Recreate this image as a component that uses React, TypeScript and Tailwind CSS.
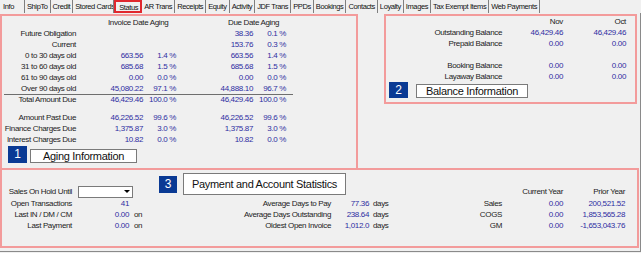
const tabs = [
  { label: "Info", cls: "w-[25px] pl-[3px]" },
  { label: "ShipTo", cls: "px-[2px]" },
  { label: "Credit", cls: "px-[2px]" },
  { label: "Stored Cards", cls: "w-[41px] pl-[2px] overflow-hidden" },
  { label: "Status", cls: "w-[28px] pl-[3px] border-2 border-[#e0282e]", active: true },
  { label: "AR Trans", cls: "px-[2px]" },
  { label: "Receipts", cls: "px-[2px]" },
  { label: "Equity", cls: "px-[2px]" },
  { label: "Activity", cls: "px-[2px]" },
  { label: "JDF Trans", cls: "px-[2px]" },
  { label: "PPDs", cls: "px-[2px]" },
  { label: "Bookings", cls: "px-[2px]" },
  { label: "Contacts", cls: "px-[2px]" },
  { label: "Loyalty", cls: "px-[2px]" },
  { label: "Images", cls: "px-[2px]" },
  { label: "Tax Exempt Items", cls: "px-[2px]" },
  { label: "Web Payments", cls: "px-[2px]" },
];

type AgingRow = { label: string; inv?: string; invPct?: string; due: string; duePct: string };

const agingTop: AgingRow[] = [
  { label: "Future Obligation", due: "38.36", duePct: "0.1 %" },
  { label: "Current", due: "153.76", duePct: "0.3 %" },
  { label: "0 to 30 days old", inv: "663.56", invPct: "1.4 %", due: "663.56", duePct: "1.4 %" },
  { label: "31 to 60 days old", inv: "685.68", invPct: "1.5 %", due: "685.68", duePct: "1.5 %" },
  { label: "61 to 90 days old", inv: "0.00", invPct: "0.0 %", due: "0.00", duePct: "0.0 %" },
  { label: "Over 90 days old", inv: "45,080.22", invPct: "97.1 %", due: "44,888.10", duePct: "96.7 %" },
];

const agingBottom: AgingRow[] = [
  { label: "Amount Past Due", inv: "46,226.52", invPct: "99.6 %", due: "46,226.52", duePct: "99.6 %" },
  { label: "Finance Charges Due", inv: "1,375.87", invPct: "3.0 %", due: "1,375.87", duePct: "3.0 %" },
  { label: "Interest Charges Due", inv: "10.82", invPct: "0.0 %", due: "10.82", duePct: "0.0 %" },
];

const VAL = "text-[#2e2ea2]";

function AgingLine({ row, tall = "h-[11px] leading-[11px]" }: { row: AgingRow; tall?: string }) {
  return (
    <div className={`grid grid-cols-[74px_67px_33px_77px_33px] text-right ${tall}`}>
      <span>{row.label}</span>
      <span className={VAL}>{row.inv}</span>
      <span className={VAL}>{row.invPct}</span>
      <span className={VAL}>{row.due}</span>
      <span className={VAL}>{row.duePct}</span>
    </div>
  );
}

function NumBox({ n, cls }: { n: string; cls: string }) {
  return (
    <div className={`bg-[#0a3a94] text-white text-[12px] tracking-normal text-center ${cls}`}>{n}</div>
  );
}

function TitleBox({ text, cls }: { text: string; cls: string }) {
  return (
    <div className={`border border-[#7a7a7a] bg-white text-[11px] tracking-[-0.3px] text-center text-[#111] whitespace-nowrap ${cls}`}>
      {text}
    </div>
  );
}

function TabStrip() {
  return (
    <div className="flex h-[13px] text-[7.5px] tracking-[-0.4px] text-[#111]">
      {tabs.map((t) => (
        <div
          key={t.label}
          className={`h-[13px] leading-[11px] whitespace-nowrap ${t.active ? "" : "border-r border-[#7f7f7f] leading-[13px]"} ${t.cls}`}
        >
          {t.label}
        </div>
      ))}
    </div>
  );
}

function AgingPanel() {
  return (
    <div className="w-[358px] h-[154px] shrink-0 border-2 border-b-0 border-[#f39b9b] pt-px">
      <div className="grid grid-cols-[106px_120px_auto] h-[11px] leading-[11px]">
        <span />
        <span>Invoice Date Aging</span>
        <span>Due Date Aging</span>
      </div>
      {agingTop.map((r) => (
        <AgingLine key={r.label} row={r} />
      ))}
      <div className="ml-[2px] w-[289px] h-px bg-[#6e6e6e]" />
      <AgingLine
        row={{ label: "Total Amount Due", inv: "46,429.46", invPct: "100.0 %", due: "46,429.46", duePct: "100.0 %" }}
        tall="h-[10px] leading-[10px]"
      />
      <div className="mt-[7px]">
        {agingBottom.map((r) => (
          <AgingLine key={r.label} row={r} />
        ))}
      </div>
      <div className="mt-px ml-[6px] flex items-end gap-[3px]">
        <NumBox n="1" cls="w-[19px] h-[17px] leading-[17px]" />
        <TitleBox text="Aging Information" cls="w-[107px] h-[14px] leading-[12px]" />
      </div>
    </div>
  );
}

const balances = [
  { label: "Outstanding Balance", nov: "46,429.46", oct: "46,429.46" },
  { label: "Prepaid Balance", nov: "0.00", oct: "0.00" },
  null,
  { label: "Booking Balance", nov: "0.00", oct: "0.00" },
  { label: "Layaway Balance", nov: "0.00", oct: "0.00" },
];

function BalancePanel() {
  return (
    <div className="ml-[26px] w-[253px] h-[90px] shrink-0 border-2 border-[#f39b9b]">
      <div className="grid grid-cols-[116px_61px_63px] h-[11px] leading-[11px] text-right">
        <span />
        <span>Nov</span>
        <span>Oct</span>
      </div>
      {balances.map((b, i) =>
        b ? (
          <div key={b.label} className="grid grid-cols-[116px_61px_63px] h-[11px] leading-[11px] text-right">
            <span>{b.label}</span>
            <span className={VAL}>{b.nov}</span>
            <span className={VAL}>{b.oct}</span>
          </div>
        ) : (
          <div key={i} className="h-[11px]" />
        )
      )}
      <div className="ml-[3px] flex items-end gap-[8px]">
        <NumBox n="2" cls="w-[19px] h-[16px] leading-[16px]" />
        <TitleBox text="Balance Information" cls="w-[112px] h-[14px] leading-[12px]" />
      </div>
    </div>
  );
}

const holdRows = [
  { label: "Open Transactions", value: "41", on: false },
  { label: "Last IN / DM / CM", value: "0.00", on: true },
  { label: "Last Payment", value: "0.00", on: true },
];

const dayRows = [
  { label: "Average Days to Pay", value: "77.36" },
  { label: "Average Days Outstanding", value: "238.64" },
  { label: "Oldest Open Invoice", value: "1,012.0" },
];

const salesRows = [
  { label: "Sales", cur: "0.00", prior: "200,521.52" },
  { label: "COGS", cur: "0.00", prior: "1,853,565.28" },
  { label: "GM", cur: "0.00", prior: "-1,653,043.76" },
];

function StatsPanel() {
  return (
    <div className="w-[639px] h-[80px] border-2 border-[#f39b9b] flex">
      <div className="w-[157px] shrink-0 pt-[15px]">
        <div className="flex items-center h-[13px]">
          <span className="w-[70px] text-right">Sales On Hold Until</span>
          <div className="ml-[6px] w-[55px] h-[12px] border border-[#7a7a7a] bg-white flex justify-end items-center pr-[2px]">
            <div className="w-0 h-0 border-l-[3px] border-r-[3px] border-t-[3px] border-l-transparent border-r-transparent border-t-black" />
          </div>
        </div>
        {holdRows.map((r) => (
          <div key={r.label} className="flex h-[11px] leading-[11px]">
            <span className="w-[70px] text-right">{r.label}</span>
            <span className={`ml-[6px] w-[51px] text-right ${VAL}`}>{r.value}</span>
            {r.on && <span className="ml-[5px]">on</span>}
          </div>
        ))}
      </div>

      <div className="w-[240px] shrink-0 pt-[3px]">
        <div className="flex items-center gap-[6px] h-[22px]">
          <NumBox n="3" cls="w-[18px] h-[17px] leading-[17px]" />
          <TitleBox text="Payment and Account Statistics" cls="w-[163px] h-[22px] leading-[20px]" />
        </div>
        <div className="mt-[3px]">
          {dayRows.map((r) => (
            <div key={r.label} className="flex h-[11px] leading-[11px]">
              <span className="w-[172px] text-right">{r.label}</span>
              <span className={`w-[38px] text-right ${VAL}`}>{r.value}</span>
              <span className="ml-[4px]">days</span>
            </div>
          ))}
        </div>
      </div>

      <div className="pt-[16px]">
        <div className="flex h-[12px] leading-[12px] text-right">
          <span className="w-[103px]" />
          <span className="w-[61px]">Current Year</span>
          <span className="w-[62px]">Prior Year</span>
        </div>
        {salesRows.map((r) => (
          <div key={r.label} className="flex h-[11px] leading-[11px] text-right">
            <span className="w-[103px]">{r.label}</span>
            <span className={`w-[61px] ${VAL}`}>{r.cur}</span>
            <span className={`w-[62px] ${VAL}`}>{r.prior}</span>
          </div>
        ))}
      </div>
    </div>
  );
}

export default function App() {
  return (
    <div className="w-[641px] h-[253px] overflow-hidden bg-[#f0f0f0] font-['Liberation_Sans',Arial,sans-serif] text-[8px] tracking-[-0.35px] text-[#1c1c1c]">
      <TabStrip />
      <div className="h-[239px] w-[641px] border-r border-b border-[#8a8a8a] pt-px">
        <div className="flex items-start">
          <AgingPanel />
          <BalancePanel />
        </div>
        <StatsPanel />
      </div>
    </div>
  );
}
